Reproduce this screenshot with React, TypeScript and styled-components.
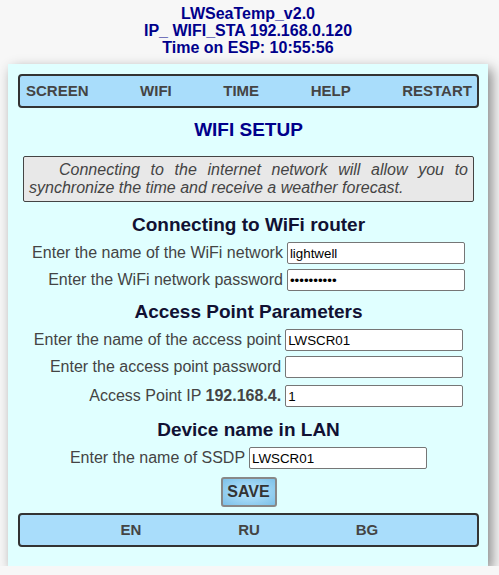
import React from "react";
import styled, { createGlobalStyle } from "styled-components";

const GlobalStyle = createGlobalStyle`
  html, body {
    margin: 0;
    padding: 0;
    background: #f7f7f7;
    font-family: "Liberation Sans", Arial, sans-serif;
  }
`;

const Page = styled.div`
  width: 496px;
  padding-top: 5px;
`;

const Header = styled.header`
  text-align: center;
  color: #00008b;
  font-weight: bold;
  font-size: 16px;
  line-height: 17px;
`;

const Card = styled.main`
  margin: 8px 0 0 8px;
  width: 480px;
  box-sizing: border-box;
  background: #e0ffff;
  padding: 10px 9px 19px 10px;
  box-shadow: 4px 5px 12px rgba(0, 0, 0, 0.45);
`;

const Bar = styled.nav<{ $centered?: boolean }>`
  display: flex;
  align-items: center;
  justify-content: ${(p) => (p.$centered ? "center" : "space-between")};
  height: 34px;
  box-sizing: border-box;
  padding: 0 5px 2px 6px;
  background: #a9ddfb;
  border: 2px solid #333;
  border-radius: 4px;
`;

const BarItem = styled.span<{ $width?: number }>`
  font-weight: bold;
  font-size: 15px;
  color: #444;
  text-align: center;
  ${(p) => (p.$width ? `width: ${p.$width}px;` : "")}
`;

const Title = styled.h2`
  margin: 11px 0 0;
  text-align: center;
  font-size: 19px;
  line-height: 22px;
  color: #00008b;
`;

const Info = styled.p`
  margin: 15px 5px 0 5px;
  padding: 4px 5px;
  background: #e8e8e8;
  border: 1px solid #444;
  border-radius: 2px;
  font-style: italic;
  font-size: 16px;
  line-height: 18px;
  color: #444;
  text-align: justify;
  text-indent: 30px;
`;

const Heading = styled.h3<{ $top: number }>`
  margin: ${(p) => p.$top}px 0 6px;
  text-align: center;
  font-size: 19px;
  line-height: 22px;
  color: #111133;
`;

const FieldGrid = styled.div`
  display: grid;
  grid-template-columns: auto auto;
  justify-content: center;
  align-items: center;
  column-gap: 4px;
  row-gap: 5px;
`;

const Label = styled.label<{ $extra?: number }>`
  justify-self: end;
  font-size: 16px;
  color: #444;
  white-space: nowrap;
  ${(p) => (p.$extra ? `margin-top: ${p.$extra}px;` : "")}
`;

const Input = styled.input<{ $extra?: number }>`
  width: 178px;
  height: 22px;
  box-sizing: border-box;
  border: 1px solid #767676;
  border-radius: 2px;
  padding: 1px 2px;
  font-family: "Liberation Sans", Arial, sans-serif;
  font-size: 13.33px;
  color: #000;
  background: #fff;
  ${(p) => (p.$extra ? `margin-top: ${p.$extra}px;` : "")}
`;

const SaveRow = styled.div`
  display: flex;
  justify-content: center;
  margin: 8px 0 6px;
`;

const SaveButton = styled.button`
  width: 56px;
  height: 30px;
  box-sizing: border-box;
  border: 2px solid #888;
  border-radius: 3px;
  background: radial-gradient(ellipse at center, #a9dcf8 30%, #7cc0e8 100%);
  font-family: "Liberation Sans", Arial, sans-serif;
  font-weight: bold;
  font-size: 16px;
  color: #333;
  padding: 0;
`;

const Strong = styled.b`
  font-weight: bold;
  color: #444;
`;

type Field = { label: React.ReactNode; value?: string; type?: string; extra?: number };

const Section: React.FC<{ title: string; top: number; fields: Field[] }> = ({ title, top, fields }) => (
  <>
    <Heading $top={top}>{title}</Heading>
    <FieldGrid>
      {fields.map((f, i) => (
        <React.Fragment key={i}>
          <Label $extra={f.extra}>{f.label}</Label>
          <Input $extra={f.extra} type={f.type ?? "text"} defaultValue={f.value ?? ""} />
        </React.Fragment>
      ))}
    </FieldGrid>
  </>
);

export default function App() {
  return (
    <>
      <GlobalStyle />
      <Page>
        <Header>
          <div>LWSeaTemp_v2.0</div>
          <div>IP_ WIFI_STA 192.168.0.120</div>
          <div>Time on ESP: 10:55:56</div>
        </Header>
        <Card>
          <Bar>
            <BarItem>SCREEN</BarItem>
            <BarItem>WIFI</BarItem>
            <BarItem>TIME</BarItem>
            <BarItem>HELP</BarItem>
            <BarItem>RESTART</BarItem>
          </Bar>
          <Title>WIFI SETUP</Title>
          <Info>
            Connecting to the internet network will allow you to synchronize the time and receive a weather forecast.
          </Info>
          <Section
            title="Connecting to WiFi router"
            top={12}
            fields={[
              { label: "Enter the name of the WiFi network", value: "lightwell" },
              { label: "Enter the WiFi network password", value: "lightwell1", type: "password" },
            ]}
          />
          <Section
            title="Access Point Parameters"
            top={10}
            fields={[
              { label: "Enter the name of the access point", value: "LWSCR01" },
              { label: "Enter the access point password", value: "", type: "password" },
              {
                label: (
                  <>
                    Access Point IP <Strong>192.168.4.</Strong>
                  </>
                ),
                value: "1",
                extra: 2,
              },
            ]}
          />
          <Section
            title="Device name in LAN"
            top={12}
            fields={[{ label: "Enter the name of SSDP", value: "LWSCR01" }]}
          />
          <SaveRow>
            <SaveButton>SAVE</SaveButton>
          </SaveRow>
          <Bar $centered>
            <BarItem $width={118}>EN</BarItem>
            <BarItem $width={118}>RU</BarItem>
            <BarItem $width={118}>BG</BarItem>
          </Bar>
        </Card>
      </Page>
    </>
  );
}
